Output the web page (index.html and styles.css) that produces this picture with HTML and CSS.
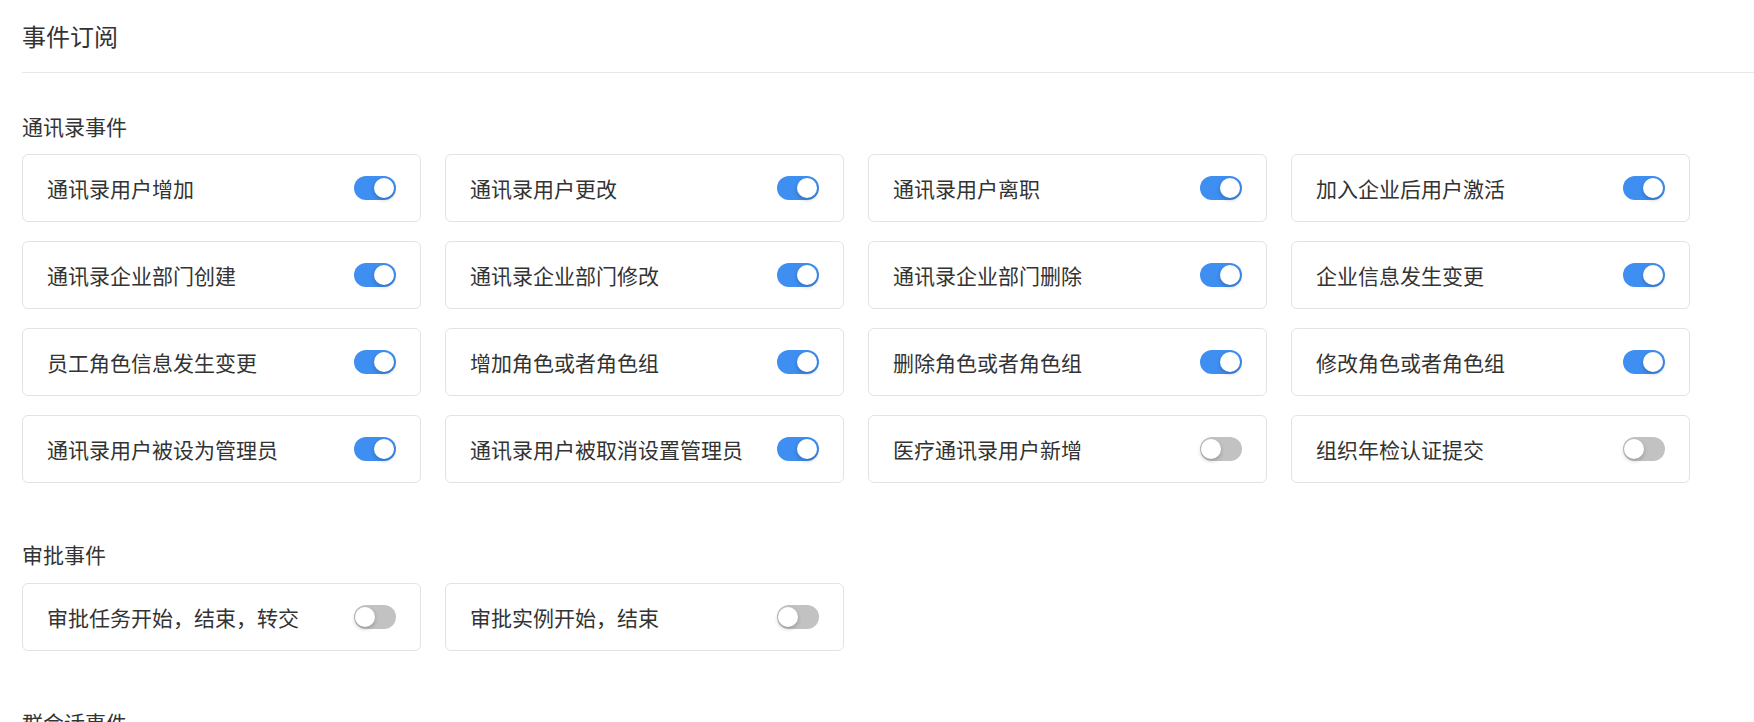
FILE: index.html
```html
<!DOCTYPE html>
<html lang="zh-CN">
<head>
<meta charset="utf-8">
<title>事件订阅</title>
<link rel="stylesheet" href="styles.css">
</head>
<body>
<div class="page">
  <div class="header">事件订阅</div>

  <div class="section">
    <div class="section-title">通讯录事件</div>
    <div class="grid">
      <div class="card"><span class="label">通讯录用户增加</span><span class="switch on"></span></div>
      <div class="card"><span class="label">通讯录用户更改</span><span class="switch on"></span></div>
      <div class="card"><span class="label">通讯录用户离职</span><span class="switch on"></span></div>
      <div class="card"><span class="label">加入企业后用户激活</span><span class="switch on"></span></div>
      <div class="card"><span class="label">通讯录企业部门创建</span><span class="switch on"></span></div>
      <div class="card"><span class="label">通讯录企业部门修改</span><span class="switch on"></span></div>
      <div class="card"><span class="label">通讯录企业部门删除</span><span class="switch on"></span></div>
      <div class="card"><span class="label">企业信息发生变更</span><span class="switch on"></span></div>
      <div class="card"><span class="label">员工角色信息发生变更</span><span class="switch on"></span></div>
      <div class="card"><span class="label">增加角色或者角色组</span><span class="switch on"></span></div>
      <div class="card"><span class="label">删除角色或者角色组</span><span class="switch on"></span></div>
      <div class="card"><span class="label">修改角色或者角色组</span><span class="switch on"></span></div>
      <div class="card"><span class="label">通讯录用户被设为管理员</span><span class="switch on"></span></div>
      <div class="card"><span class="label">通讯录用户被取消设置管理员</span><span class="switch on"></span></div>
      <div class="card"><span class="label">医疗通讯录用户新增</span><span class="switch"></span></div>
      <div class="card"><span class="label">组织年检认证提交</span><span class="switch"></span></div>
    </div>
  </div>

  <div class="section">
    <div class="section-title">审批事件</div>
    <div class="grid">
      <div class="card"><span class="label">审批任务开始，结束，转交</span><span class="switch"></span></div>
      <div class="card"><span class="label">审批实例开始，结束</span><span class="switch"></span></div>
    </div>
  </div>

  <div class="section">
    <div class="section-title">群会话事件</div>
  </div>
</div>
</body>
</html>
```

FILE: styles.css
```css
html, body {
  margin: 0;
  padding: 0;
  background: #ffffff;
}

body {
  font-family: "Noto Sans CJK SC", "Noto Sans", sans-serif;
  color: #333333;
}

.page {
  padding-left: 22px;
}

.header {
  font-size: 24px;
  line-height: 36px;
  padding: 18px 0;
  border-bottom: 1px solid #e8e8e8;
}

.section {
  margin-top: 56px;
}

.header + .section {
  margin-top: 37.5px;
}

.section-title {
  font-size: 21px;
  line-height: 30px;
  margin-bottom: 13.5px;
}

.grid {
  display: grid;
  grid-template-columns: repeat(4, 399px);
  grid-auto-rows: 68px;
  column-gap: 24px;
  row-gap: 19px;
}

.card {
  box-sizing: border-box;
  border: 1px solid #e3e3e3;
  border-radius: 6px;
  display: flex;
  align-items: center;
  justify-content: space-between;
  padding: 0 24px 0 24px;
}

.label {
  font-size: 21px;
  line-height: 30px;
  white-space: nowrap;
}

.switch {
  position: relative;
  flex: none;
  width: 42px;
  height: 24px;
  border-radius: 12px;
  background: #c2c2c2;
}

.switch::after {
  content: "";
  position: absolute;
  top: 2px;
  left: 1px;
  width: 20px;
  height: 20px;
  border-radius: 50%;
  background: #ffffff;
  box-shadow: 0 2px 4px rgba(0, 0, 0, 0.22);
}

.switch.on {
  background: #3f8ef2;
}

.switch.on::after {
  left: auto;
  right: 2px;
}
```
